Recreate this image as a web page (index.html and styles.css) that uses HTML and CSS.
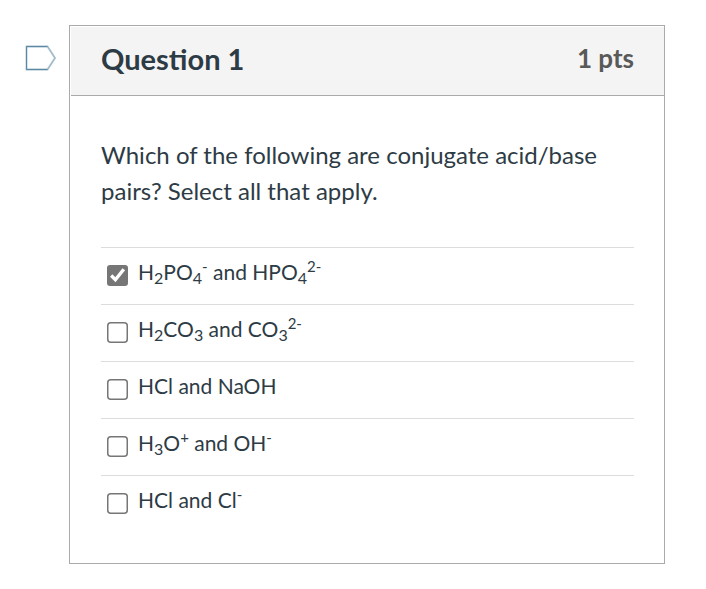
FILE: index.html
```html
<!DOCTYPE html>
<html lang="en">
<head>
    <meta charset="UTF-8">
    <meta name="viewport" content="width=device-width, initial-scale=1.0">
    <title>Question 1</title>
    <link rel="stylesheet" href="styles.css">
</head>
<body>
<div class="question-row">
    <button class="flag" type="button" aria-label="Flag question">
        <svg width="32" height="26" viewBox="0 0 32 26">
            <path d="M1.5 1.5H22.5L30 13L22.5 24.5H1.5Z" fill="#fff" stroke="#a3bccb" stroke-width="1.8"/>
            <path d="M22.5 1.5H1.5V24.5H22.5" fill="none" stroke="#5a8aa3" stroke-width="1"/>
        </svg>
    </button>
    <form class="question">
        <div class="header">
            <h1 class="title">Question 1</h1>
            <span class="points">1 pts</span>
        </div>
        <fieldset class="content">
            <legend class="prompt">Which of the following are conjugate acid/base pairs? Select all that apply.</legend>
            <div class="answers">
                <div class="answer">
                    <input type="checkbox" id="answer1" checked>
                    <label for="answer1">H<sub>2</sub>PO<sub>4</sub><sup>-</sup> and HPO<sub>4</sub><sup>2-</sup></label>
                </div>
                <div class="answer">
                    <input type="checkbox" id="answer2">
                    <label for="answer2">H<sub>2</sub>CO<sub>3</sub> and CO<sub>3</sub><sup>2-</sup></label>
                </div>
                <div class="answer">
                    <input type="checkbox" id="answer3">
                    <label for="answer3">HCl and NaOH</label>
                </div>
                <div class="answer">
                    <input type="checkbox" id="answer4">
                    <label for="answer4">H<sub>3</sub>O<sup>+</sup> and OH<sup>-</sup></label>
                </div>
                <div class="answer">
                    <input type="checkbox" id="answer5">
                    <label for="answer5">HCl and Cl<sup>-</sup></label>
                </div>
            </div>
        </fieldset>
    </form>
</div>
</body>
</html>
```
FILE: styles.css
```css
* {
    box-sizing: border-box;
}
body {
    margin: 0;
    padding: 25px 41px 25px 25px;
    background: #fff;
    color: #2d3b45;
    font-family: Lato, sans-serif;
}
.question-row {
    display: flex;
    align-items: flex-start;
    gap: 12px;
}
.flag {
    display: flex;
    margin-top: 20px;
    padding: 0;
    border: none;
    background: none;
    cursor: pointer;
}
.question {
    flex: 1;
    border: 1px solid #aaa;
}
.header {
    display: flex;
    align-items: center;
    justify-content: space-between;
    height: 69px;
    margin: 1px 0 0 1px;
    padding: 0 30px 6px 30px;
    background: #f4f4f4;
    border-bottom: 1px solid #aaa;
}
.title {
    margin: 0;
    font-size: 29px;
    font-weight: 700;
}
.points {
    color: #595959;
    font-size: 26px;
    font-weight: 700;
}
.content {
    margin: 0;
    padding: 41px 30px 31px 31px;
    border: none;
}
.prompt {
    float: left;
    width: 100%;
    margin-bottom: 38px;
    padding: 0;
    font-size: 24px;
    line-height: 36px;
}
.answers {
    clear: both;
}
.answer {
    display: flex;
    align-items: center;
    gap: 10px;
    height: 57px;
    padding: 0 0 2px 6px;
    border-top: 1px solid #ddd;
}
.answer input {
    width: 14px;
    height: 14px;
    margin: 0;
    accent-color: #767676;
    zoom: 1.5;
}
.answer label {
    padding-bottom: 6px;
    font-size: 21px;
    line-height: 30px;
}
sub,
sup {
    position: relative;
    font-size: 16px;
    line-height: 0;
    vertical-align: baseline;
}
sub {
    bottom: -4px;
}
sup {
    top: -8px;
    font-size: 15px;
}
```
